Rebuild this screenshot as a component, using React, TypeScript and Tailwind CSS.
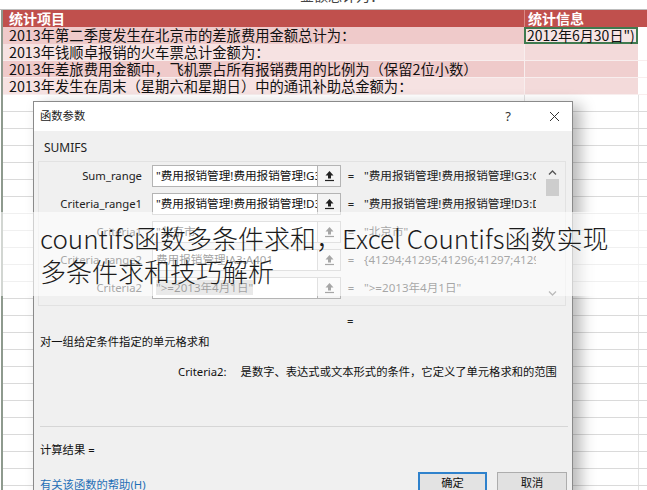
import React from 'react'

const UI = "font-['Noto_Sans','Noto_Sans_CJK_SC',sans-serif]"

const dataRows = [
  { text: '2013年第二季度发生在北京市的差旅费用金额总计为：', bg: 'bg-[#efcaca]', side: 'bg-[#f3dcdc]' },
  { text: '2013年钱顺卓报销的火车票总计金额为：', bg: 'bg-[#f6e2e2]', side: 'bg-[#f3dada]' },
  { text: '2013年差旅费用金额中，飞机票占所有报销费用的比例为（保留2位小数）', bg: 'bg-[#efcaca]', side: 'bg-[#f0cfcf]' },
  { text: '2013年发生在周末（星期六和星期日）中的通讯补助总金额为：', bg: 'bg-[#f6e2e2]', side: 'bg-[#f3dada]' },
]

const fields = [
  { label: 'Sum_range', input: '"费用报销管理!费用报销管理!G3:G401"', value: '"费用报销管理!费用报销管理!G3:G401"' },
  { label: 'Criteria_range1', input: '"费用报销管理!费用报销管理!D3:D401"', value: '"费用报销管理!费用报销管理!D3:D401"' },
  { label: 'Criteria1', input: '"北京市"', value: '"北京市"' },
  { label: 'Criteria_range2', input: '费用报销管理!A3:A401', value: '{41294;41295;41296;41297;41298;41299}' },
  { label: 'Criteria2', input: '">=2013年4月1日"', value: '">=2013年4月1日"', selected: true },
]

function RefIcon() {
  return (
    <svg width="11" height="12" viewBox="0 0 11 12">
      <path d="M5.5 1 L9.5 5.5 H7 V8.5 H4 V5.5 H1.5 Z" fill="#222" />
      <line x1="1" y1="10.5" x2="10" y2="10.5" stroke="#222" strokeWidth="1.2" />
    </svg>
  )
}

function Chevron({ down }: { down?: boolean }) {
  return (
    <svg width="9" height="8" viewBox="0 0 9 8">
      <path d={down ? 'M1 2.5 L4.5 6 L8 2.5' : 'M1 5.5 L4.5 2 L8 5.5'} fill="none" stroke="#555" strokeWidth="1.3" />
    </svg>
  )
}

function FieldRow({ f }: { f: (typeof fields)[number] }) {
  return (
    <div className="flex h-[28px] items-center">
      <div className="w-[104px] pr-[1px] text-right text-[11.3px] text-[#222]">{f.label}</div>
      <div className="ml-[9px] h-[22px] w-[166px] overflow-hidden whitespace-nowrap border border-[#b4b4b4] bg-white px-[3px] text-[11.6px] leading-[20px] text-[#111]">
        <span className={f.selected ? 'bg-[#c9c9c9]' : ''}>{f.input}</span>
      </div>
      <div className="flex h-[22px] w-[23px] items-center justify-center border border-l-0 border-[#b4b4b4] bg-[#f4f4f4]">
        <RefIcon />
      </div>
      <div className="ml-[6px] w-[8px] text-center text-[11.3px] text-[#222]">=</div>
      <div className="ml-[9px] w-[172px] overflow-hidden whitespace-nowrap text-[11.6px] text-[#222]">{f.value}</div>
    </div>
  )
}

export default function App() {
  const blank = Array.from({ length: 24 })
  return (
    <div className="relative h-[490px] w-[647px] overflow-hidden bg-white font-['Noto_Sans_CJK_SC',sans-serif]">
      {/* spreadsheet */}
      <div className="h-[10px] overflow-hidden border-b border-[#bdbdbd]">
        <div className="-mt-[13px] pl-[300px] text-[14px] leading-[16px] text-[#444]">金额总计为：</div>
      </div>
      <div className="ml-[1px] border-l-2 border-[#8e9a8e]">
        <div className="grid h-[17px] grid-cols-[521px_114px_1fr] bg-[#c0504d] text-[14px] font-bold leading-[17px] text-white">
          <div className="pl-[6px]">统计项目</div>
          <div className="border-l border-[#d98886] pl-[3px]">统计信息</div>
          <div />
        </div>
        {dataRows.map((r, i) => (
          <div key={i} className="grid h-[17px] grid-cols-[521px_114px_1fr] border-b border-[#f8eeee] text-[14.3px] leading-[16px] text-[#111]">
            <div className={`${r.bg} whitespace-nowrap pl-[6px]`}>{r.text}</div>
            {i === 0 ? (
              <div className="border-2 border-[#3f7a4f] bg-[#f6e4e4] pl-[1px] text-[14px] leading-[13px]">2012年6月30日")</div>
            ) : (
              <div className={`${r.side} border-l border-[#f8eeee]`} />
            )}
            <div className="bg-white" />
          </div>
        ))}
        {blank.map((_, i) => (
          <div key={i} className="grid h-[17px] grid-cols-[521px_114px_1fr] border-b border-[#dadada]">
            <div />
            <div className="border-l border-[#e2e2e2]" />
            <div className="border-l border-[#e2e2e2]" />
          </div>
        ))}
      </div>

      {/* dialog window */}
      <div className={`absolute left-[33px] top-[101px] h-[400px] w-[540px] border border-[#8a8a8a] bg-[#f0f0f0] shadow-[8px_4px_14px_rgba(0,0,0,0.28)] ${UI}`}>
        <div className="flex h-[29px] items-center bg-white pl-[6px] pr-[11px]">
          <span className="text-[11.3px] text-[#222]">函数参数</span>
          <span className="ml-auto w-[14px] text-center text-[13px] text-[#333]">?</span>
          <span className="ml-[32px] flex w-[14px] justify-center">
            <svg width="11" height="11" viewBox="0 0 11 11">
              <path d="M1 1 L10 10 M10 1 L1 10" stroke="#333" strokeWidth="1" />
            </svg>
          </span>
        </div>
        <div className="mt-[9px] h-[16px] pl-[10px] text-[12px] leading-[16px] text-[#222]">SUMIFS</div>
        <div className="ml-[4px] mt-[5px] flex h-[145px] w-[528px] border border-[#e2e2e2]">
          <div className="flex flex-col">
            {fields.map(f => (
              <FieldRow key={f.label} f={f} />
            ))}
          </div>
          <div className="ml-[9px] flex w-[14px] flex-col items-center pb-[8px] pt-[7px]">
            <Chevron />
            <div className="mt-[2px] h-[17px] w-[13px] bg-[#cdcdcd]" />
            <div className="flex-1" />
            <Chevron down />
          </div>
        </div>
        <div className="mt-[7px] h-[16px] pl-[313px] text-[11.3px] leading-[16px] text-[#222]">=</div>
        <div className="mt-[5px] h-[16px] pl-[6px] text-[11.3px] leading-[16px] text-[#111]">对一组给定条件指定的单元格求和</div>
        <div className="mt-[14px] flex h-[16px] items-center whitespace-nowrap pl-[144px] text-[11.3px] leading-[16px] text-[#111]">
          <span>Criteria2:</span>
          <span className="ml-[14px]">是数字、表达式或文本形式的条件，它定义了单元格求和的范围</span>
        </div>
        <div className="ml-[6px] mr-[4px] mt-[46px] h-px bg-[#d6d6d6]" />
        <div className="mt-[15px] h-[16px] pl-[6px] text-[11.3px] leading-[16px] text-[#111]">计算结果 =</div>
        <div className="mt-[14px] flex pl-[6px] pr-[5px]">
          <span className="mt-[5px] text-[11.3px] leading-[16px] text-[#1f6fb6]">有关该函数的帮助(H)</span>
          <div className="ml-auto flex gap-[10px]">
            <div className="flex h-[23px] w-[69px] items-center justify-center border-2 border-[#2f82cc] bg-[#e3e3e3] text-[11.3px] text-[#111]">确定</div>
            <div className="flex h-[23px] w-[70px] items-center justify-center border border-[#adadad] bg-[#e1e1e1] text-[11.3px] text-[#111]">取消</div>
          </div>
        </div>
      </div>

      {/* caption band over the screenshot */}
      <div className="absolute left-0 top-[212px] w-full bg-white/60 py-[9px] pl-[40px] text-[26px] font-light leading-[33px] text-[#1c1c1c]">
        <div className="whitespace-nowrap">countifs函数多条件求和，Excel Countifs函数实现</div>
        <div className="whitespace-nowrap">多条件求和技巧解析</div>
      </div>
    </div>
  )
}
